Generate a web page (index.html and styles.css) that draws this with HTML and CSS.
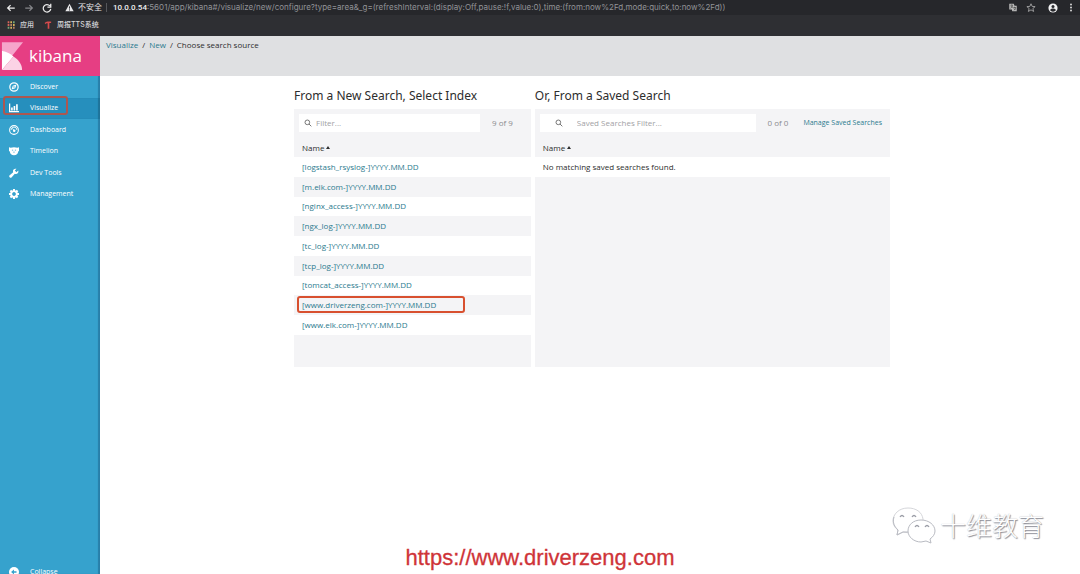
FILE: index.html
```html
<!DOCTYPE html>
<html lang="en">
<head>
<meta charset="utf-8">
<title>Kibana</title>
<link rel="stylesheet" href="styles.css">
</head>
<body>
<header class="browser">
  <div class="toolbar">
    <button class="tool" aria-label="Back"><svg viewBox="0 0 24 24"><path d="M21 12H4M11 5l-7 7 7 7"/></svg></button>
    <button class="tool dim" aria-label="Forward"><svg viewBox="0 0 24 24"><path d="M3 12h17M13 5l7 7-7 7"/></svg></button>
    <button class="tool" aria-label="Reload"><svg viewBox="0 0 24 24"><path d="M19 7a9 9 0 1 0 2 7M21 2v8h-8"/></svg></button>
    <div class="address">
      <svg class="warn" viewBox="0 0 24 24"><path fill="#e8e8ea" d="M12 2 1 22h22z"/><path stroke="#292a2e" stroke-width="2.5" d="M12 9v6M12 17v3"/></svg>
      <span class="unsafe">不安全</span>
      <span class="url"><b>10.0.0.54</b>:5601/app/kibana#/visualize/new/configure?type=area&amp;_g=(refreshInterval:(display:Off,pause:!f,value:0),time:(from:now%2Fd,mode:quick,to:now%2Fd))</span>
    </div>
    <div class="actions">
      <button class="tool" aria-label="Translate"><svg viewBox="0 0 24 24"><path fill="#bbb" stroke="none" d="M2 2h12l2 5h6v15H10l-1-5H2z"/><path stroke="#333" stroke-width="1.6" d="M5 6h7M8.500 4v2M11 7c-1 4-3 5-6 7M6 8l5 5M13 12h7M16 10v2M19 13c-1 4-3 5-5 6M14 14l5 5"/></svg></button>
      <button class="tool" aria-label="Bookmark"><svg viewBox="0 0 24 24"><path stroke-width="2" d="m12 2 3 7 8 .7-6 5 2 7.800-7-4.200-7 4.200 2-7.800-6-5L9 9z"/></svg></button>
      <button class="tool profile" aria-label="Profile"><svg viewBox="0 0 24 24"><circle cx="12" cy="12" r="11" fill="#f2f2f3" stroke="none"/><circle cx="12" cy="8.500" r="3.600" fill="#292a2e" stroke="none"/><path fill="#292a2e" stroke="none" d="M5 17c1-5 13-5 14 0-3 5-11 5-14 0z"/></svg></button>
      <button class="tool" aria-label="Menu"><svg viewBox="0 0 24 24"><g fill="#ddd" stroke="none"><circle cx="12" cy="4" r="2.500"/><circle cx="12" cy="12" r="2.500"/><circle cx="12" cy="20" r="2.500"/></g></svg></button>
    </div>
  </div>
  <nav class="bookmarks">
    <a href="#"><svg viewBox="0 0 24 24"><g fill="#d9655b"><path d="M2 1h5v6H2zM2 9h5v6H2z"/></g><g fill="#d7b45a"><path d="M10 1h5v6h-5zM10 17h5v6h-5zM18 9h5v6h-5z"/></g><g fill="#75a878"><path d="M18 1h5v6h-5zM2 17h5v6H2z"/></g><g fill="#b78265"><path d="M10 9h5v6h-5zM18 17h5v6h-5z"/></g></svg>应用</a>
    <a href="#"><svg viewBox="0 0 24 24"><path fill="#d84a4c" d="M2 6C7 1 14 1 22 2l-1 4h-5v17h-5V7C7 6 5 7 4 10z"/></svg>周报TTS系统</a>
  </nav>
</header>

<div class="app">
  <aside class="sidebar">
    <a class="brand" href="#" aria-label="kibana">
      <svg viewBox="0 0 24 30"><path fill="#f6a5cb" d="M1 0h22L11 15 1 9z"/><path fill="#fff" d="M1 9c5 1 9 3 12 6L1 29z"/><path fill="#fbd3e5" d="M13 15c5 3 9 8 9 14H1z"/></svg>
      <span>kibana</span>
    </a>
    <nav class="menu">
      <a href="#"><svg viewBox="0 0 24 24"><circle cx="12" cy="12" r="10" fill="none" stroke="#fff" stroke-width="3"/><path fill="#fff" d="m18 6-3 9-9 3 3-9z"/><circle cx="12" cy="12" r="1.700" fill="#36a2cd"/></svg>Discover</a>
      <a href="#" class="active"><svg viewBox="0 0 24 24"><path fill="#fff" d="M0 1h3v18h21v3H0zM5 11h4v7H5zM11 7h4v11h-4zM17 3h4v15h-4z"/></svg>Visualize</a>
      <a href="#"><svg viewBox="0 0 24 24"><circle cx="12" cy="12" r="10.500" fill="none" stroke="#fff" stroke-width="2.500"/><path fill="none" stroke="#fff" stroke-width="2" d="M5 12a7 7 0 0 1 14 0M8 8l5 6"/><circle cx="12.500" cy="14" r="3" fill="#fff"/></svg>Dashboard</a>
      <a href="#"><svg viewBox="0 0 24 24"><path fill="#fff" d="M0 3l4 1q8-2 16 0l4-1v9l-2 1q-1 9-10 9T2 13l-2-1z"/><path fill="#36a2cd" d="M7 9h3v2H7zM14 9h3v2h-3zM10 14h4l-2 3z"/></svg>Timelion</a>
      <a href="#"><svg viewBox="0 0 24 24"><path fill="#fff" d="M22 6l-4 4-4-4 4-4c-6-2-10 3-8 8L1 18c-2 3 2 7 5 5l8-9c6 2 10-3 8-8z"/></svg>Dev Tools</a>
      <a href="#"><svg viewBox="0 0 24 24"><circle cx="12" cy="12" r="6.500" fill="none" stroke="#fff" stroke-width="5"/><path stroke="#fff" stroke-width="5" d="M12 0v5M12 19v5M0 12h5M19 12h5M3.500 3.500 7 7M17 17l3.500 3.500M3.500 20.500 7 17M17 7l3.500-3.500"/><circle cx="12" cy="12" r="4" fill="#36a2cd"/></svg>Management</a>
    </nav>
    <button class="collapse"><svg viewBox="0 0 24 24"><circle cx="12" cy="12" r="12" fill="#fff"/><path fill="#36a2cd" d="M5 12l7-6v4h6v4h-6v4z"/></svg>Collapse</button>
  </aside>

  <main class="content">
    <nav class="crumbs"><a href="#">Visualize</a><span>/</span><a href="#">New</a><span>/</span><span>Choose search source</span></nav>
    <div class="sources">
      <section class="source">
        <h1>From a New Search, Select Index</h1>
        <div class="panel">
          <div class="filters">
            <label class="search"><svg viewBox="0 0 24 24"><circle cx="10" cy="10" r="7"/><path d="m15 15 7 7"/></svg><input type="text" placeholder="Filter..." aria-label="Filter indices"></label>
            <span class="count">9 of 9</span>
          </div>
          <button class="sort">Name <i></i></button>
          <table class="indices">
            <tbody>
            <tr><td><a href="#">[logstash_rsyslog-]YYYY.MM.DD</a></td></tr>
            <tr><td><a href="#">[m.elk.com-]YYYY.MM.DD</a></td></tr>
            <tr><td><a href="#">[nginx_access-]YYYY.MM.DD</a></td></tr>
            <tr><td><a href="#">[ngx_log-]YYYY.MM.DD</a></td></tr>
            <tr><td><a href="#">[tc_log-]YYYY.MM.DD</a></td></tr>
            <tr><td><a href="#">[tcp_log-]YYYY.MM.DD</a></td></tr>
            <tr><td><a href="#">[tomcat_access-]YYYY.MM.DD</a></td></tr>
            <tr><td class="marked"><a href="#">[www.driverzeng.com-]YYYY.MM.DD</a></td></tr>
            <tr><td><a href="#">[www.elk.com-]YYYY.MM.DD</a></td></tr>
            </tbody>
          </table>
        </div>
      </section>
      <section class="source">
        <h1>Or, From a Saved Search</h1>
        <div class="panel">
          <div class="filters">
            <label class="search wide"><svg viewBox="0 0 24 24"><circle cx="10" cy="10" r="7"/><path d="m15 15 7 7"/></svg><input type="text" placeholder="Saved Searches Filter..." aria-label="Saved searches filter"></label>
            <span class="count">0 of 0</span>
            <a class="manage" href="#">Manage Saved Searches</a>
          </div>
          <button class="sort">Name <i></i></button>
          <p class="empty">No matching saved searches found.</p>
        </div>
      </section>
    </div>
  </main>
</div>

<div class="site">https://www.driverzeng.com</div>
<div class="watermark">
  <svg viewBox="0 0 44 38"><g fill="#fff" stroke="#b9bbc2" stroke-width="1"><path stroke="#d5d6da" d="M16 2C7 2 1 8 1 15c0 4 2 7 5 9l-1 5 6-3c13 3 21-4 20-13C30 6 24 2 16 2z"/><path fill="none" d="M2 11c-2 6 1 10 4 13l-1 5 6-3h5"/><path d="M29 14c-8 0-13 5-13 11s6 11 13 11l5-1 5 2-1-4c3-2 5-5 5-8 0-6-6-11-14-11z"/></g><path fill="none" stroke="#9b9ea7" stroke-width="1.300" d="M8 11q2-3 4 0M20 11q2-3 4 0M23 21q2-3 4 0M33 21q2-3 4 0"/></svg>
  <span>十维教育</span>
</div>
</body>
</html>
```
FILE: styles.css
```css
*, *::before, *::after { box-sizing: border-box; }
body {
  margin: 0;
  height: 100vh;
  overflow: hidden;
  display: flex;
  flex-direction: column;
  background: #fff;
  color: #2d2d2d;
  font: 8px/12px "Open Sans", "Noto Sans CJK SC", sans-serif;
}
a { color: #2b7a8e; text-decoration: none; }
button { border: 0; padding: 0; background: none; color: inherit; font: inherit; }
svg { display: block; flex: none; }

/* Browser chrome */
.browser {
  flex: none;
  height: 36px;
  background: #2e2f33;
  color: #e4e4e6;
  font-family: Inter, "Noto Sans CJK SC", sans-serif;
}
.toolbar { display: flex; align-items: center; height: 15px; padding: 0 4px 0 6px; background: #26272b; }
.tool { width: 10px; margin-right: 8px; }
.tool svg { width: 10px; height: 10px; fill: none; stroke: #eee; stroke-width: 3; }
.tool.dim svg { stroke: #85868a; }
.address { flex: 1; min-width: 0; display: flex; align-items: center; padding-left: 5px; white-space: nowrap; }
.warn { width: 9px; height: 9px; margin-right: 4px; }
.unsafe { padding-right: 4px; margin-right: 6px; border-right: 1px solid #56575b; line-height: 9px; }
.url { color: #929397; font-family: Inter, sans-serif; overflow: hidden; }
.url b { color: #f0f0f1; font-family: Roboto, sans-serif; font-weight: 500; }
.actions { display: flex; align-items: center; gap: 8px; }
.actions .tool { margin: 0; }
.actions .tool svg { width: 10px; height: 9px; stroke: #bbb; }
.actions .profile { margin-left: 4px; }
.actions .profile svg { height: 10px; }
.bookmarks { display: flex; gap: 10px; height: 20px; padding-left: 7px; align-items: center; }
.bookmarks a { display: flex; align-items: center; gap: 5px; color: #d5d5d8; font-size: 7px; font-weight: 500; }
.bookmarks svg { width: 8px; height: 8px; }

/* Application shell */
.app { flex: 1; min-height: 0; display: flex; }
.sidebar {
  flex: none;
  width: 100px;
  display: flex;
  flex-direction: column;
  background: #36a2cd;
  box-shadow: inset -2px 0 1px #287fa9;
  color: #fff;
  font-size: 7px;
  overflow: hidden;
}
.brand {
  height: 40px;
  flex: none;
  display: flex;
  align-items: center;
  gap: 5px;
  padding-left: 1px;
  background: #e63e83;
  color: #fff;
  font: 500 17px/24px "Open Sans", sans-serif;
}
.brand svg { width: 23px; height: 29px; }
.menu { display: grid; height: 129px; flex: none; grid-auto-rows: 1fr; }
.menu a, .collapse { display: flex; align-items: center; gap: 11px; padding-left: 9px; color: #fff; }
.menu svg, .collapse svg { width: 10px; height: 10px; }
.menu a { position: relative; }
.menu .active { background: #268fbd; box-shadow: inset -2px 0 1px #1f7399; }
.menu .active::after {
  content: "";
  position: absolute;
  left: 3px;
  top: -2px;
  width: 65px;
  height: 19px;
  border: 2px solid #ad5750;
  border-radius: 3px;
}
.collapse { margin-top: auto; margin-bottom: -4px; flex: none; }

.content { flex: 1; min-width: 0; }
.crumbs { display: flex; gap: 4px; height: 40px; padding: 3px 6px; background: #dfe0e2; }

.sources {
  display: grid;
  grid-template-columns: 2fr 3fr;
  gap: 4px;
  max-width: 600px;
  margin: 10px auto 0;
  padding-left: 4px;
}
.source { display: flex; flex-direction: column; }
h1 { margin: 0; font: 400 12px/20px "Noto Sans", sans-serif; padding-bottom: 3px; }
.panel { flex: 1; min-height: 258px; background: #f4f4f6; }
.filters { display: flex; align-items: center; padding: 5px 8px 6px 5px; }
.search { flex: 1; min-width: 0; height: 18px; display: flex; align-items: center; gap: 4px; padding-left: 5px; background: #fff; }
.search svg { width: 8px; height: 8px; fill: none; stroke: #777; stroke-width: 3; }
.search.wide { padding-left: 15px; gap: 14px; }
.search input { flex: 1; min-width: 0; border: 0; padding: 0; outline: 0; background: none; font: inherit; }
.search input::placeholder { color: #a2a2a5; opacity: 1; }
.count { margin: 0 10px 0 12px; color: #8b8b8f; }
.manage { margin-left: 5px; font-size: 7px; }
.sort { display: flex; align-items: center; gap: 2px; height: 19px; padding-left: 8px; }
.sort i { border: 2px solid transparent; border-top: 0; border-bottom: 3px solid #2d2d2d; }
.indices { width: 100%; height: 178px; border-collapse: collapse; background: #fff; }
.indices tr:nth-child(even) { background: #f4f4f6; }
.indices td { padding: 0 8px; }
.marked { position: relative; }
.marked::after {
  content: "";
  position: absolute;
  left: 3px;
  top: 1px;
  width: 168px;
  height: 17px;
  border: 2px solid #d8502f;
  border-radius: 3px;
}
.empty { margin: 0; padding: 4px 8px; background: #fff; }

/* Overlays */
.site {
  position: absolute;
  left: 0;
  right: 0;
  bottom: 3px;
  text-align: center;
  color: #cf3438;
  font: 22px/26px "Liberation Sans", Arial, sans-serif;
  -webkit-text-stroke: 0.3px #cf3438;
}
.watermark { position: absolute; right: 36px; bottom: 29px; display: flex; align-items: center; gap: 4px; }
.watermark svg { width: 44px; height: 38px; }
.watermark span {
  color: #fff;
  font: 300 26px/40px "Noto Sans CJK SC", sans-serif;
  text-shadow: 1px 1px 1px #8b8d96, 0 0 1px #b5b7bd;
}
```
